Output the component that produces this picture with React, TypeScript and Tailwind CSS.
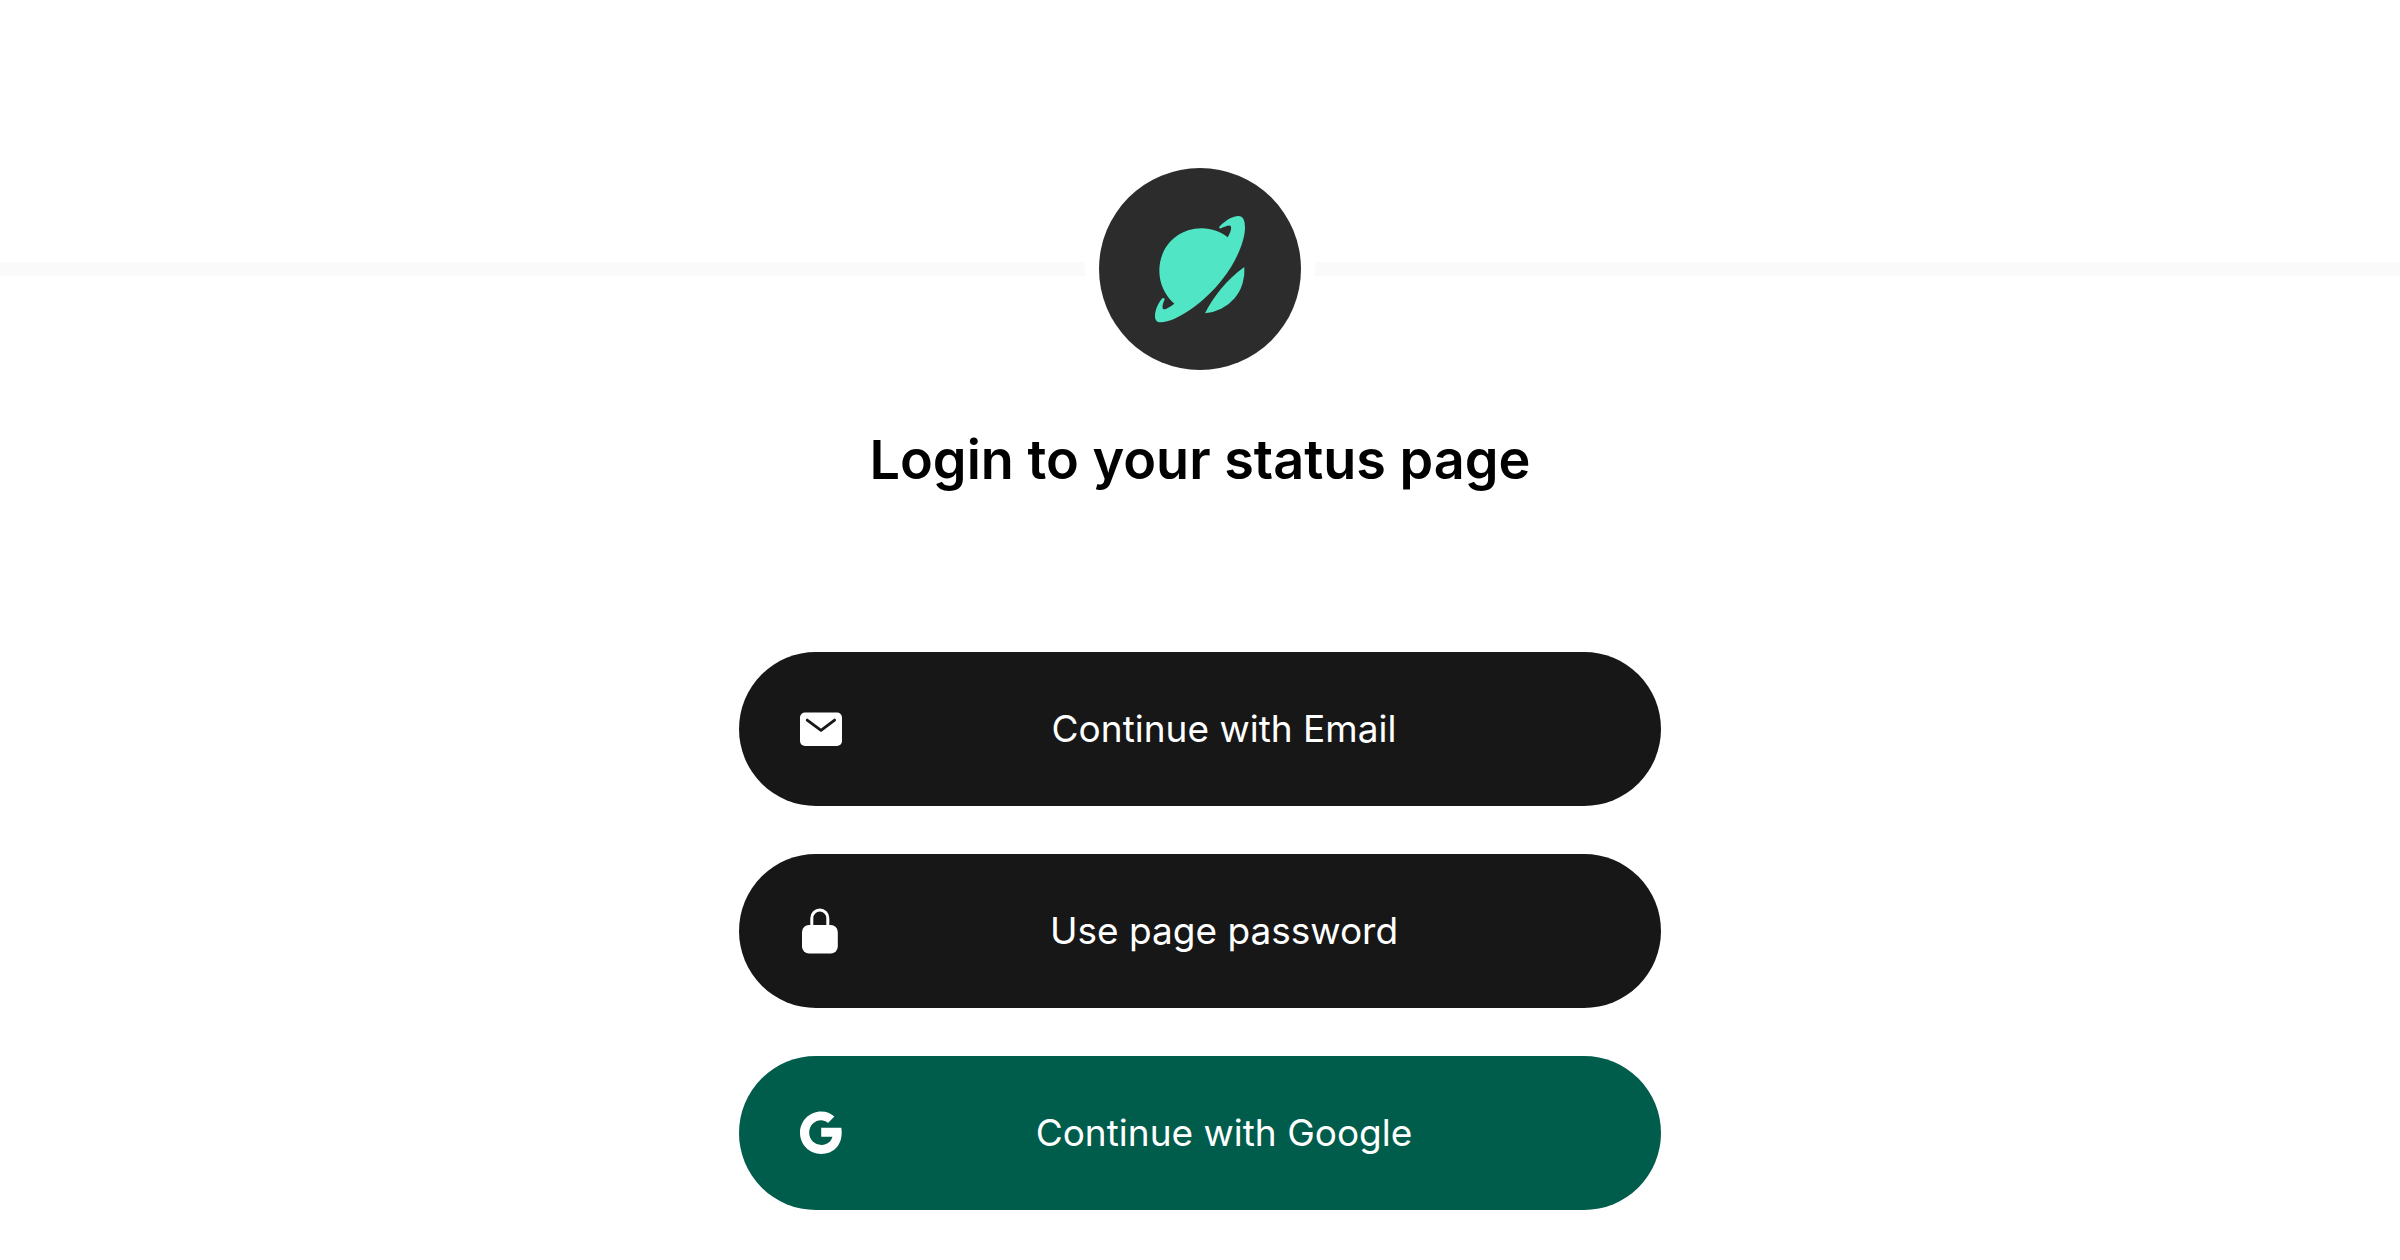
import type { ReactNode } from 'react'

function PlanetLogo() {
  return (
    <svg viewBox="0 11 360 390" className="w-[120px] h-[130px]" fill="#50e5c5" aria-hidden="true">
      {/* planet and ring */}
      <path d="M238 79C260 57 280 47 295 47C309 47 315 60 315 82C315 120 290 184 245 240C195 304 110 366 62 366C50 366 44 358 45 345C46 328 55 307 67 294Q74 291 74 298C68 308 66 322 69 326C74 330 90 320 103 310C75 285 58 250 58 211C58 140 112 84 185 84C215 84 243 95 263 111C271 98 276 84 272 77C268 72 255 78 243 84Q236 85 238 79Z" />
      {/* lower edge */}
      <path d="M313 200A128 128 0 0 1 195 339C217 294 259 238 313 200Z" />
    </svg>
  )
}

function MailIcon() {
  return (
    <svg viewBox="0 0 48 48" className="size-12 shrink-0" fill="none" aria-hidden="true">
      <rect x="3" y="7.5" width="42" height="33.5" rx="5" fill="#fff" />
      <path d="M10.2 15.1L24 25.3L37.6 15.1" stroke="#171717" strokeWidth="2.8" strokeLinecap="round" strokeLinejoin="round" />
    </svg>
  )
}

function LockIcon() {
  return (
    <svg viewBox="0 0 48 48" className="size-12 shrink-0" fill="none" aria-hidden="true">
      <rect x="5" y="18" width="35.8" height="28.6" rx="7" fill="#fff" />
      <path d="M14.8 20V11a8 8 0 0 1 16 0v9" stroke="#fff" strokeWidth="3" />
    </svg>
  )
}

function GoogleIcon() {
  return (
    <svg viewBox="0 0 48 48" className="size-12 shrink-0" fill="#fff" aria-hidden="true">
      <path d="M44.3 18.7c.3 1.5.4 3.2.4 5.1C44.7 36.5 36.4 45 24.2 45C12.4 45 3 35.6 3 23.8S12.4 2.5 24.2 2.5c5.2 0 9.7 1.9 13.2 5.1l-6.4 6.4C24.4 7.8 12.2 12.6 12.2 23.8c0 6.9 5.4 12.1 12.2 12.1c5.9 0 9.8-3.4 11-8.1H24.2v-9.1z" />
    </svg>
  )
}

function LoginButton({ icon, className, children }: { icon: ReactNode; className: string; children: ReactNode }) {
  return (
    <button type="button" className={`flex w-full h-[154px] items-center rounded-full px-[58px] text-white ${className}`}>
      {icon}
      <span className="flex-1 text-center text-[37px] leading-12">{children}</span>
    </button>
  )
}

export default function App() {
  return (
    <main className="min-h-screen bg-white pt-[168px] pb-12 font-['Inter',sans-serif]">
      <div className="flex items-center gap-[14px]">
        <div className="h-[14px] flex-1 bg-[#fafafa]" />
        <div className="flex size-[202px] items-center justify-center rounded-full bg-[#2c2c2c]">
          <PlanetLogo />
        </div>
        <div className="h-[14px] flex-1 bg-[#fafafa]" />
      </div>

      <h1 className="mt-[54px] text-center text-[54px] leading-[72px] font-semibold text-black">
        Login to your status page
      </h1>

      <div className="mx-auto mt-[156px] flex max-w-[922px] flex-col gap-12">
        <LoginButton icon={<MailIcon />} className="bg-[#171717]">Continue with Email</LoginButton>
        <LoginButton icon={<LockIcon />} className="bg-[#171717]">Use page password</LoginButton>
        <LoginButton icon={<GoogleIcon />} className="bg-[#005c4b]">Continue with Google</LoginButton>
      </div>
    </main>
  )
}
